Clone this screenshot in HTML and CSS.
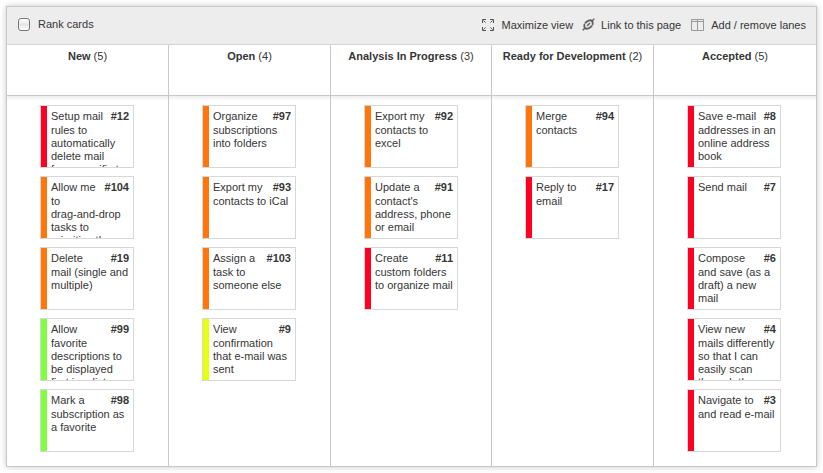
FILE: index.html
```html
<!DOCTYPE html>
<html lang="en">
<head>
<meta charset="utf-8">
<title>Card wall</title>
<link rel="stylesheet" href="styles.css">
</head>
<body>
<main class="board">
  <header class="toolbar">
    <label class="rank"><span class="checkbox"></span>Rank cards</label>
    <nav class="actions">
      <a class="action maximize"><svg width="12" height="12" viewBox="0 0 12 12" fill="none" stroke="#505050" stroke-width="1"><path d="M.5 4V.5H4M1.500 1.500l2 2M8 .5h3.500V4M10.500 1.500l-2 2M.5 8v3.500H4M1.500 10.500l2-2M8 11.500h3.500V8M10.500 10.500l-2-2"/></svg>Maximize view</a>
      <a class="action link"><svg width="13" height="13" viewBox="0 0 13 13" fill="none" stroke="#626262"><ellipse cx="6.500" cy="6.500" rx="4.900" ry="3.300" transform="rotate(-45 6.500 6.500)" stroke-width="2"/><path stroke-width="1.500" d="M.7 12.300l2.300-2.300M10 3l2.300-2.300M5 8l3-3"/><path stroke="#ededed" stroke-width="1" d="M2.500 5.500l2.500 1.500M8 6l2.500 1.500"/></svg>Link to this page</a>
      <a class="action lanes"><svg width="13" height="12" viewBox="0 0 13 12" fill="none" stroke="#999"><path d="M.5.5h12v11H.5zM6.500.5v11M.5 2.500h12"/></svg>Add / remove lanes</a>
    </nav>
  </header>
  <div class="lanes-grid">
    <section class="lane">
      <h2><b>New</b> (5)</h2>
      <div class="cards">
        <article class="card red"><b class="id">#12</b>Setup mail<br>rules to<br>automatically<br>delete mail<br>from specific t</article>
        <article class="card orange"><b class="id">#104</b>Allow me<br>to<br>drag-and-drop<br>tasks to<br>prioritize them</article>
        <article class="card orange"><b class="id">#19</b>Delete<br>mail (single and<br>multiple)</article>
        <article class="card green"><b class="id">#99</b>Allow<br>favorite<br>descriptions to<br>be displayed<br>first in a list</article>
        <article class="card green"><b class="id">#98</b>Mark a<br>subscription as<br>a favorite</article>
      </div>
    </section>
    <section class="lane">
      <h2><b>Open</b> (4)</h2>
      <div class="cards">
        <article class="card orange"><b class="id">#97</b>Organize<br>subscriptions<br>into folders</article>
        <article class="card orange"><b class="id">#93</b>Export my<br>contacts to iCal</article>
        <article class="card orange"><b class="id">#103</b>Assign a<br>task to<br>someone else</article>
        <article class="card yellow"><b class="id">#9</b>View<br>confirmation<br>that e-mail was<br>sent</article>
      </div>
    </section>
    <section class="lane">
      <h2><b>Analysis In Progress</b> (3)</h2>
      <div class="cards">
        <article class="card orange"><b class="id">#92</b>Export my<br>contacts to<br>excel</article>
        <article class="card orange"><b class="id">#91</b>Update a<br>contact's<br>address, phone<br>or email</article>
        <article class="card red"><b class="id">#11</b>Create<br>custom folders<br>to organize mail</article>
      </div>
    </section>
    <section class="lane">
      <h2><b>Ready for Development</b> (2)</h2>
      <div class="cards">
        <article class="card orange"><b class="id">#94</b>Merge<br>contacts</article>
        <article class="card red"><b class="id">#17</b>Reply to<br>email</article>
      </div>
    </section>
    <section class="lane">
      <h2><b>Accepted</b> (5)</h2>
      <div class="cards">
        <article class="card red"><b class="id">#8</b>Save e-mail<br>addresses in an<br>online address<br>book</article>
        <article class="card red"><b class="id">#7</b>Send mail</article>
        <article class="card red"><b class="id">#6</b>Compose<br>and save (as a<br>draft) a new<br>mail</article>
        <article class="card red"><b class="id">#4</b>View new<br>mails differently<br>so that I can<br>easily scan<br>through the</article>
        <article class="card red"><b class="id">#3</b>Navigate to<br>and read e-mail</article>
      </div>
    </section>
  </div>
</main>
</body>
</html>
```

FILE: styles.css
```css
* { box-sizing: border-box; }

body {
  margin: 0;
  padding: 6px;
  background: #fff;
  color: #363636;
  font: 11px/13px "Liberation Sans", Arial, sans-serif;
}

.board {
  width: 811px;
  height: 461px;
  display: flex;
  flex-direction: column;
  border: 1px solid #c8c8c8;
  box-shadow: 0 0 6px rgba(0, 0, 0, .22);
  background: #fff;
}

.toolbar {
  height: 38px;
  display: flex;
  justify-content: space-between;
  align-items: center;
  padding: 0 10px 0 11px;
  background: #ededed;
  border-bottom: 1px solid #d4d4d4;
}

.rank {
  display: flex;
  align-items: center;
  gap: 8px;
  padding-bottom: 2px;
}

.checkbox {
  width: 12px;
  height: 13px;
  border: 1px solid #777;
  border-radius: 3px;
  background: linear-gradient(#fff, #e6e6e6 50%, #fff);
}

.actions, .action { display: flex; align-items: center; }
.action svg { display: block; margin-bottom: 2px; }
.maximize { gap: 8px; }
.link { gap: 6px; margin-left: 9px; }
.lanes { gap: 7px; margin-left: 10px; }

.lanes-grid {
  flex: 1;
  display: grid;
  grid-template-columns: 162px 162px 161px 162px 162px;
}

.lane { border-right: 1px solid #c8c8c8; }
.lane:last-child { border-right: 0; }

h2 {
  height: 51px;
  margin: 0;
  padding-top: 5px;
  border-bottom: 1px solid #c8c8c8;
  font-size: 11px;
  font-weight: normal;
  text-align: center;
  white-space: nowrap;
}

.cards {
  display: flex;
  flex-direction: column;
  gap: 8px;
  padding: 9px 0 0 33px;
  background: linear-gradient(#eee, #fff 5px);
}

.card {
  width: 94px;
  height: 63px;
  padding: 3px 4px 0 10px;
  overflow: hidden;
  border: 1px solid #d8d8d8;
  background: linear-gradient(to right, var(--stripe) 6px, #fff 6px);
  white-space: nowrap;
}

.card::first-line { line-height: 15px; }

.id {
  float: right;
  line-height: 15px;
}

.red { --stripe: #ff0022; }
.orange { --stripe: #ff770c; }
.green { --stripe: #80ff40; }
.yellow { --stripe: #e6ff0d; }
```
